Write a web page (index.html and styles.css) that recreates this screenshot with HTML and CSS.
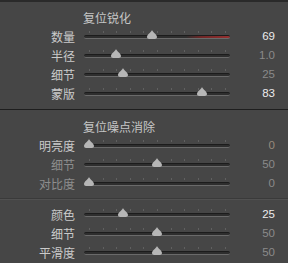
FILE: index.html
```html
<!DOCTYPE html>
<html lang="zh-CN">

<head>
    <meta charset="UTF-8">
    <title>细节</title>
    <link rel="stylesheet" href="styles.css">
</head>

<body>
    <div class="panel">
        <div class="section">
            <div class="title">复位锐化</div>

            <div class="row">
                <span class="label">数量</span>
                <div class="slider">
                    <div class="ticks"></div>
                    <div class="track amount"></div>
                    <svg class="thumb" style="left: 67.6px" width="10" height="9" viewBox="0 0 10 9"><path d="M5 0C6 2.5 10 4.5 10 7C10 8.2 9 9 7.8 9H2.2C1 9 0 8.2 0 7C0 4.5 4 2.5 5 0Z"/></svg>
                </div>
                <span class="value on">69</span>
            </div>

            <div class="row">
                <span class="label">半径</span>
                <div class="slider">
                    <div class="ticks"></div>
                    <div class="track"></div>
                    <svg class="thumb" style="left: 32.2px" width="10" height="9" viewBox="0 0 10 9"><path d="M5 0C6 2.5 10 4.5 10 7C10 8.2 9 9 7.8 9H2.2C1 9 0 8.2 0 7C0 4.5 4 2.5 5 0Z"/></svg>
                </div>
                <span class="value">1.0</span>
            </div>

            <div class="row">
                <span class="label">细节</span>
                <div class="slider">
                    <div class="ticks"></div>
                    <div class="track"></div>
                    <svg class="thumb" style="left: 39px" width="10" height="9" viewBox="0 0 10 9"><path d="M5 0C6 2.5 10 4.5 10 7C10 8.2 9 9 7.8 9H2.2C1 9 0 8.2 0 7C0 4.5 4 2.5 5 0Z"/></svg>
                </div>
                <span class="value">25</span>
            </div>

            <div class="row">
                <span class="label">蒙版</span>
                <div class="slider">
                    <div class="ticks"></div>
                    <div class="track"></div>
                    <svg class="thumb" style="left: 117.9px" width="10" height="9" viewBox="0 0 10 9"><path d="M5 0C6 2.5 10 4.5 10 7C10 8.2 9 9 7.8 9H2.2C1 9 0 8.2 0 7C0 4.5 4 2.5 5 0Z"/></svg>
                </div>
                <span class="value on">83</span>
            </div>
        </div>

        <div class="section noise">
            <div class="title">复位噪点消除</div>

            <div class="row">
                <span class="label">明亮度</span>
                <div class="slider">
                    <div class="ticks"></div>
                    <div class="track"></div>
                    <svg class="thumb" style="left: 5px" width="10" height="9" viewBox="0 0 10 9"><path d="M5 0C6 2.5 10 4.5 10 7C10 8.2 9 9 7.8 9H2.2C1 9 0 8.2 0 7C0 4.5 4 2.5 5 0Z"/></svg>
                </div>
                <span class="value zero">0</span>
            </div>

            <div class="row off">
                <span class="label">细节</span>
                <div class="slider">
                    <div class="ticks"></div>
                    <div class="track"></div>
                    <svg class="thumb" style="left: 73px" width="10" height="9" viewBox="0 0 10 9"><path d="M5 0C6 2.5 10 4.5 10 7C10 8.2 9 9 7.8 9H2.2C1 9 0 8.2 0 7C0 4.5 4 2.5 5 0Z"/></svg>
                </div>
                <span class="value">50</span>
            </div>

            <div class="row off">
                <span class="label">对比度</span>
                <div class="slider">
                    <div class="ticks"></div>
                    <div class="track"></div>
                    <svg class="thumb" style="left: 5px" width="10" height="9" viewBox="0 0 10 9"><path d="M5 0C6 2.5 10 4.5 10 7C10 8.2 9 9 7.8 9H2.2C1 9 0 8.2 0 7C0 4.5 4 2.5 5 0Z"/></svg>
                </div>
                <span class="value">0</span>
            </div>
        </div>

        <div class="section color">
            <div class="row">
                <span class="label">颜色</span>
                <div class="slider">
                    <div class="ticks"></div>
                    <div class="track"></div>
                    <svg class="thumb" style="left: 39px" width="10" height="9" viewBox="0 0 10 9"><path d="M5 0C6 2.5 10 4.5 10 7C10 8.2 9 9 7.8 9H2.2C1 9 0 8.2 0 7C0 4.5 4 2.5 5 0Z"/></svg>
                </div>
                <span class="value on">25</span>
            </div>

            <div class="row">
                <span class="label">细节</span>
                <div class="slider">
                    <div class="ticks"></div>
                    <div class="track"></div>
                    <svg class="thumb" style="left: 73px" width="10" height="9" viewBox="0 0 10 9"><path d="M5 0C6 2.5 10 4.5 10 7C10 8.2 9 9 7.8 9H2.2C1 9 0 8.2 0 7C0 4.5 4 2.5 5 0Z"/></svg>
                </div>
                <span class="value">50</span>
            </div>

            <div class="row">
                <span class="label">平滑度</span>
                <div class="slider">
                    <div class="ticks"></div>
                    <div class="track"></div>
                    <svg class="thumb" style="left: 73px" width="10" height="9" viewBox="0 0 10 9"><path d="M5 0C6 2.5 10 4.5 10 7C10 8.2 9 9 7.8 9H2.2C1 9 0 8.2 0 7C0 4.5 4 2.5 5 0Z"/></svg>
                </div>
                <span class="value">50</span>
            </div>
        </div>
    </div>
</body>

</html>
```

FILE: styles.css
```css
body {
    margin: 0;
    background-color: #464646;
    font-family: 'Noto Sans CJK SC', sans-serif;
    overflow: hidden;
}

.panel {
    width: 288px;
    height: 263px;
    background-color: #464646;
    border-top: 2px solid #2a2a2a;
    box-sizing: border-box;
}

.section {
    padding: 6px 0 6px 0;
}

.section.noise {
    border-top: 1px solid #1e1e1e;
    padding-top: 7px;
    padding-bottom: 5px;
}

.section.color {
    border-top: 1px solid #3a3a3a;
    box-shadow: inset 0 1px 0 #515151;
    padding-top: 6px;
    padding-bottom: 0;
}

.title {
    padding-left: 83px;
    height: 19px;
    line-height: 19px;
    font-size: 12px;
    color: #c6c6c6;
}

.row {
    display: grid;
    grid-template-columns: 75px 146px 36px;
    column-gap: 9px;
    height: 19px;
    align-items: center;
}

.label {
    text-align: right;
    font-size: 12px;
    line-height: 19px;
    color: #cacaca;
}

.row.off .label {
    color: #8e8e8e;
}

.slider {
    position: relative;
    height: 19px;
}

.ticks {
    margin: 4px 5px 0 5px;
    width: 137px;
    height: 2px;
    background: repeating-linear-gradient(to right, #606060 0 1px, transparent 1px 13.6px);
}

.track {
    margin-top: 2px;
    height: 4px;
    box-sizing: border-box;
    border-radius: 2px;
    background-color: #2e2e2e;
    border-top: 1px solid #1c1c1c;
    border-bottom: 1px solid #6a6a6a;
}

.track.amount {
    background: linear-gradient(to right, #2e2e2e 0%, #2e2e2e 70%, #6e2626 80%, #963030 100%);
}

.thumb {
    position: absolute;
    top: 3px;
    margin-left: -5px;
    fill: #b6b6b6;
}

.value {
    text-align: right;
    font-family: 'Liberation Sans', sans-serif;
    font-size: 11.5px;
    line-height: 19px;
    color: #8a8a8a;
}

.value.zero {
    color: #968a7c;
}

.value.on {
    color: #ececec;
}
```
